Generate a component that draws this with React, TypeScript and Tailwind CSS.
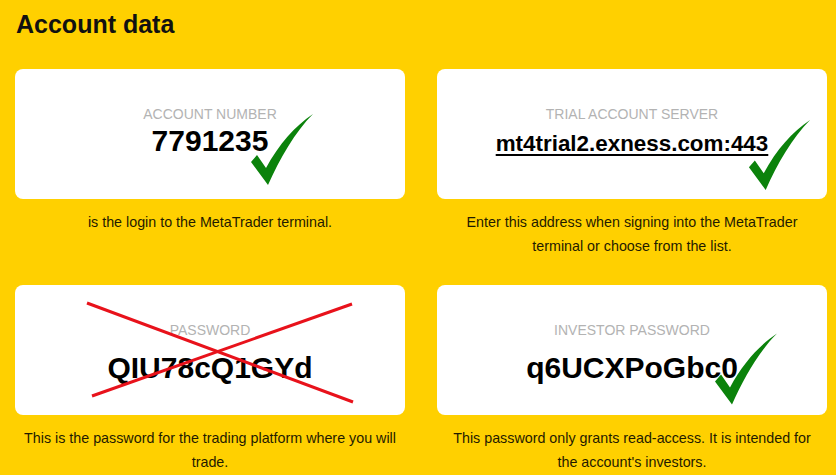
import React from 'react'

const font = { fontFamily: '"Liberation Sans", Arial, sans-serif' }

function Check({ className }: { className: string }) {
  return (
    <svg viewBox="0 0 62 71" className={`absolute ${className}`} aria-hidden>
      <path d="M0 48 L6 41 L15 54 C28 30 44 12 62 0 C44 18 29 44 17 71 Z" fill="#0b820b" />
    </svg>
  )
}

function Cross() {
  return (
    <svg viewBox="0 0 390 130" className="absolute inset-0 w-[390px] h-[130px]" aria-hidden>
      <line x1="72" y1="18" x2="338" y2="117" stroke="#e8121b" strokeWidth="3" />
      <line x1="77" y1="111" x2="337" y2="19" stroke="#e8121b" strokeWidth="3" />
    </svg>
  )
}

type Item = {
  label: string
  value: string
  valueClass: string
  desc: React.ReactNode
  overlay: React.ReactNode
}

const items: Item[] = [
  {
    label: 'ACCOUNT NUMBER',
    value: '7791235',
    valueClass: 'mt-[2px] text-[30px] leading-[34px]',
    desc: 'is the login to the MetaTrader terminal.',
    overlay: <Check className="left-[236px] top-[45px] w-[62px] h-[71px]" />,
  },
  {
    label: 'TRIAL ACCOUNT SERVER',
    value: 'mt4trial2.exness.com:443',
    valueClass: 'mt-[5px] text-[22.4px] leading-[34px] underline underline-offset-[3px] decoration-2',
    desc: (
      <>
        Enter this address when signing into the MetaTrader
        <br />
        terminal or choose from the list.
      </>
    ),
    overlay: <Check className="left-[311px] top-[51px] w-[63px] h-[70px]" />,
  },
  {
    label: 'PASSWORD',
    value: 'QIU78cQ1GYd',
    valueClass: 'mt-[13px] text-[30px] leading-[34px]',
    desc: (
      <>
        This is the password for the trading platform where you will
        <br />
        trade.
      </>
    ),
    overlay: <Cross />,
  },
  {
    label: 'INVESTOR PASSWORD',
    value: 'q6UCXPoGbc0',
    valueClass: 'mt-[13px] text-[30px] leading-[34px]',
    desc: (
      <>
        This password only grants read-access. It is intended for
        <br />
        the account's investors.
      </>
    ),
    overlay: <Check className="left-[278px] top-[48px] w-[62px] h-[72px]" />,
  },
]

export default function App() {
  return (
    <div className="w-[836px] h-[475px] overflow-hidden bg-[#ffd000] pl-[15px] pt-[10px]" style={font}>
      <h1 className="pl-[1px] text-[25px] leading-[29px] font-bold text-[#111]">Account data</h1>
      <div className="mt-[30px] grid grid-cols-[390px_390px] gap-x-[32px] gap-y-[27px]">
        {items.map((item) => (
          <div key={item.label}>
            <div className="relative h-[130px] rounded-[8px] bg-white flex flex-col items-center pt-[37px]">
              <div className="text-[14px] leading-[16px] text-[#b3b3b3]">{item.label}</div>
              <div className={`font-bold text-black ${item.valueClass}`}>{item.value}</div>
              {item.overlay}
            </div>
            <p className="mt-[11px] text-center text-[14.3px] leading-[24px] text-[#1f1b00]">{item.desc}</p>
          </div>
        ))}
      </div>
    </div>
  )
}
